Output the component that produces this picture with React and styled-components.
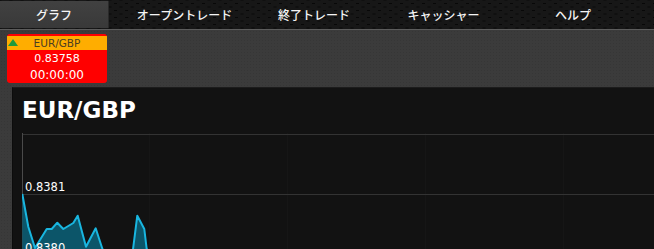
import React from 'react';
import styled, { createGlobalStyle } from 'styled-components';

const GlobalStyle = createGlobalStyle`
  html, body {
    margin: 0;
    padding: 0;
    background: #3b3b3b;
    overflow: hidden;
  }
  #root {
    width: 654px;
    height: 249px;
  }
`;

const Page = styled.div`
  width: 654px;
  height: 249px;
  display: flex;
  flex-direction: column;
  overflow: hidden;
  background-color: #3b3b3b;
  background-image: radial-gradient(rgba(0, 0, 0, 0.08) 1px, transparent 1px);
  background-size: 3px 3px;
`;

const NavBar = styled.nav`
  height: 29px;
  flex: 0 0 29px;
  display: flex;
  gap: 21.5px;
  background-color: #171717;
  background-image: radial-gradient(#080808 1px, transparent 1.2px),
    radial-gradient(#080808 1px, transparent 1.2px);
  background-size: 11px 7px;
  background-position: 0 0, 5.5px 3.5px;
  border-bottom: 1px solid #5c5c5c;
  box-sizing: content-box;
`;

const Tab = styled.div`
  width: 108px;
  height: 27px;
  margin-top: 1px;
  display: flex;
  align-items: center;
  justify-content: center;
  font-family: 'Noto Sans CJK JP', 'DejaVu Sans', sans-serif;
  font-size: 12px;
  font-weight: 500;
  color: #f4f4f4;
  background: ${(p) => (p.active ? 'linear-gradient(#414141, #393939)' : 'transparent')};
  border-right: ${(p) => (p.active ? '1px solid #2a2a2a' : 'none')};
`;

const Content = styled.div`
  flex: 1;
  display: flex;
  flex-direction: column;
  padding-top: 4px;
  min-height: 0;
`;

const Ticker = styled.div`
  width: 100px;
  height: 49px;
  margin-left: 7px;
  padding-top: 2px;
  box-sizing: border-box;
  background: #ff0000;
  border-radius: 3px;
  display: flex;
  flex-direction: column;
  font-family: 'DejaVu Sans', Verdana, sans-serif;
  overflow: hidden;
`;

const TickerHead = styled.div`
  position: relative;
  height: 14px;
  line-height: 14px;
  background: #ffad00;
  color: #4a3d22;
  font-size: 10.5px;
  text-align: center;
`;

const UpArrow = styled.span`
  position: absolute;
  left: 1px;
  top: 3px;
  width: 0;
  height: 0;
  border-left: 5px solid transparent;
  border-right: 5px solid transparent;
  border-bottom: 7px solid #1f9a3c;
`;

const TickerRow = styled.div`
  height: ${(p) => p.h}px;
  line-height: ${(p) => p.h}px;
  color: #ffffff;
  font-size: ${(p) => p.size}px;
  text-align: center;
`;

const Panel = styled.section`
  flex: 1;
  margin: 4px 0 0 12px;
  background: #121212;
  border-top: 1px solid #1c1c1c;
  border-left: 1px solid #0c0c0c;
  padding-left: 9px;
  display: flex;
  flex-direction: column;
  min-height: 0;
`;

const Title = styled.h1`
  margin: 0;
  padding: 8px 0 9px;
  line-height: 28px;
  font-family: 'DejaVu Sans', Verdana, sans-serif;
  font-weight: bold;
  font-size: 23px;
  color: #ffffff;
`;

const ChartBox = styled.div`
  flex: 1;
  min-height: 0;
  overflow: hidden;
`;

const points = [
  [0.3, 61], [6.3, 93.7], [13, 115], [24.7, 96], [29.7, 96], [35.3, 89.7],
  [41.3, 96], [51.3, 90], [55.7, 82.7], [64, 113.7], [73.7, 95.3], [79.7, 113.7],
  [88, 138], [100, 134], [108, 140], [115.3, 82.7], [122.3, 96], [124.7, 116],
  [132, 146], [180, 150], [260, 142], [340, 152], [420, 145], [520, 150], [632, 148],
];

const Chart = () => {
  const line = points.map(([x, y], i) => `${i ? 'L' : 'M'}${x} ${y}`).join(' ');
  const area = `${line} L632 200 L0.3 200 Z`;
  return (
    <svg width="632" height="116" viewBox="0 0 632 116">
      {[127, 265, 403, 541].map((x) => (
        <line key={x} x1={x + 0.5} y1="0" x2={x + 0.5} y2="116" stroke="#161616" />
      ))}
      <line x1="0" y1="1.5" x2="632" y2="1.5" stroke="#333" />
      <line x1="0" y1="61.5" x2="632" y2="61.5" stroke="#333" />
      <line x1="0.5" y1="0" x2="0.5" y2="116" stroke="#4a4a4a" />
      <path d={area} fill="#0c5569" />
      <path d={line} fill="none" stroke="#19b6e0" strokeWidth="2" strokeLinejoin="round" />
      <text x="3" y="58" fill="#ffffff" fontSize="11.5" fontFamily="DejaVu Sans, sans-serif">0.8381</text>
      <text x="3" y="119" fill="#ffffff" fontSize="11.5" fontFamily="DejaVu Sans, sans-serif">0.8380</text>
    </svg>
  );
};

const tabs = ['グラフ', 'オープントレード', '終了トレード', 'キャッシャー', 'ヘルプ'];

export default function App() {
  return (
    <>
      <GlobalStyle />
      <Page>
        <NavBar>
          {tabs.map((t, i) => (
            <Tab key={t} active={i === 0}>{t}</Tab>
          ))}
        </NavBar>
        <Content>
          <Ticker>
            <TickerHead>
              <UpArrow />
              EUR/GBP
            </TickerHead>
            <TickerRow h={17} size={11}>0.83758</TickerRow>
            <TickerRow h={16} size={12}>00:00:00</TickerRow>
          </Ticker>
          <Panel>
            <Title>EUR/GBP</Title>
            <ChartBox>
              <Chart />
            </ChartBox>
          </Panel>
        </Content>
      </Page>
    </>
  );
}
